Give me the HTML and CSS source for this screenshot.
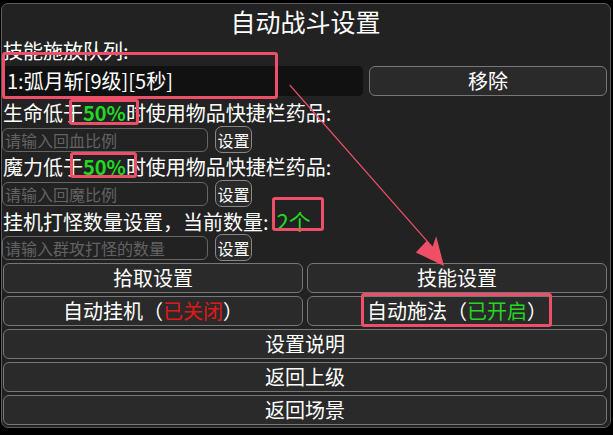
FILE: index.html
```html
<!DOCTYPE html>
<html lang="zh">
<head>
  <meta charset="UTF-8" />
  <title>自动战斗设置</title>
  <link rel="stylesheet" href="styles.css">
</head>
<body>
  <div class="page">
    <div class="panel">
      <h2 class="title">自动战斗设置</h2>

      <div class="label label-first">技能施放队列:</div>
      <div class="queue-row">
        <div class="queue-select">1:弧月斩[9级][5秒]</div>
        <button class="btn">移除</button>
      </div>

      <div class="label label-gap">生命低于<b class="green">50%</b>时使用物品快捷栏药品:</div>
      <div class="input-row">
        <input type="text" placeholder="请输入回血比例" />
        <button class="btn-small">设置</button>
      </div>

      <div class="label">魔力低于<b class="green">50%</b>时使用物品快捷栏药品:</div>
      <div class="input-row">
        <input type="text" placeholder="请输入回魔比例" />
        <button class="btn-small">设置</button>
      </div>

      <div class="label">挂机打怪数量设置，当前数量:<span class="green count">2个</span></div>
      <div class="input-row">
        <input type="text" placeholder="请输入群攻打怪的数量" />
        <button class="btn-small">设置</button>
      </div>

      <div class="btn-grid">
        <button class="btn">拾取设置</button>
        <button class="btn">技能设置</button>
        <button class="btn">自动挂机（<span class="red">已关闭</span>）</button>
        <button class="btn">自动施法（<span class="green">已开启</span>）</button>
        <button class="btn wide">设置说明</button>
        <button class="btn wide">返回上级</button>
        <button class="btn wide">返回场景</button>
      </div>
    </div>

    <!-- пометки поверх скриншота -->
    <div class="mark mark-queue"></div>
    <div class="mark mark-hp"></div>
    <div class="mark mark-mp"></div>
    <div class="mark mark-count"></div>
    <div class="mark mark-cast"></div>
    <svg class="arrow" width="613" height="435" viewBox="0 0 613 435">
      <polygon fill="#ee4f67" points="290,84.6 290.8,85.3 432.6,246.4 436.2,236.2 444,266 415.8,252.4 426.4,241.2 289.3,85.6" />
    </svg>
  </div>
</body>
</html>
```

FILE: styles.css
```css
body {
  margin: 0;
  background: #000;
  font-family: "Noto Sans CJK SC", "Noto Sans", sans-serif;
  color: #fff;
}

.page {
  position: relative;
  width: 613px;
  height: 435px;
  overflow: hidden;
}

.panel {
  box-sizing: border-box;
  margin: 3px 0 0 1px;
  width: 610px;
  background: #222;
  border: 1px solid #5c5c5c;
  border-radius: 7px;
  padding: 0 2px 2px 1px;
}

.title {
  margin: 0;
  height: 35px;
  line-height: 35px;
  font-size: 25px;
  font-weight: normal;
  text-align: center;
}

.label {
  height: 27px;
  line-height: 27px;
  font-size: 20px;
  white-space: nowrap;
}

.label-first {
  height: 26px;
  line-height: 24px;
}

.label-gap {
  margin-top: 3px;
}

.green {
  color: #22d822;
}

.red {
  color: #e01818;
}

.count {
  margin-left: 8px;
  font-size: 22px;
}

.queue-row {
  display: flex;
  gap: 6px;
  margin-top: 1px;
  height: 30px;
}

.queue-select {
  width: 360px;
  background: #111;
  border-radius: 5px;
  font-size: 20px;
  line-height: 30px;
  padding-left: 4px;
  box-sizing: border-box;
}

.queue-row .btn {
  flex: 1;
  margin-right: 1px;
}

.btn {
  box-sizing: border-box;
  height: 30px;
  background: #2a2a2a;
  border: 1px solid #777;
  border-radius: 6px;
  color: #fff;
  font-family: inherit;
  font-size: 20px;
  line-height: 26px;
  padding: 0;
  cursor: pointer;
}

.input-row {
  display: flex;
  align-items: center;
  gap: 7px;
  height: 27px;
}

.input-row input {
  box-sizing: border-box;
  width: 206px;
  height: 24px;
  margin-left: -1px;
  background: transparent;
  border: 1px solid #666;
  border-radius: 6px;
  color: #fff;
  font-family: inherit;
  font-size: 16px;
  padding: 0 2px;
}

.input-row input::placeholder {
  color: #626262;
}

.btn-small {
  box-sizing: border-box;
  height: 27px;
  width: 37px;
  background: #2a2a2a;
  border: 1px solid #888;
  border-radius: 7px;
  color: #fff;
  font-family: inherit;
  font-size: 16px;
  padding: 0;
}

.btn-grid {
  display: grid;
  grid-template-columns: 1fr 1fr;
  column-gap: 4px;
  row-gap: 3px;
  margin-top: 2px;
  margin-right: 1px;
}

.btn-grid .wide {
  grid-column: 1 / 3;
}

.mark {
  position: absolute;
  box-sizing: border-box;
  border: 3px solid #ec4f68;
  border-radius: 3px;
}

.mark-queue {
  left: 2px;
  top: 52px;
  width: 276px;
  height: 47px;
}

.mark-hp {
  left: 69px;
  top: 99px;
  width: 70px;
  height: 26px;
}

.mark-mp {
  left: 70px;
  top: 152px;
  width: 67px;
  height: 26px;
}

.mark-count {
  left: 272px;
  top: 197px;
  width: 52px;
  height: 34px;
}

.mark-cast {
  left: 361px;
  top: 293px;
  width: 191px;
  height: 34px;
}

.arrow {
  position: absolute;
  left: 0;
  top: 0;
  pointer-events: none;
}
```
